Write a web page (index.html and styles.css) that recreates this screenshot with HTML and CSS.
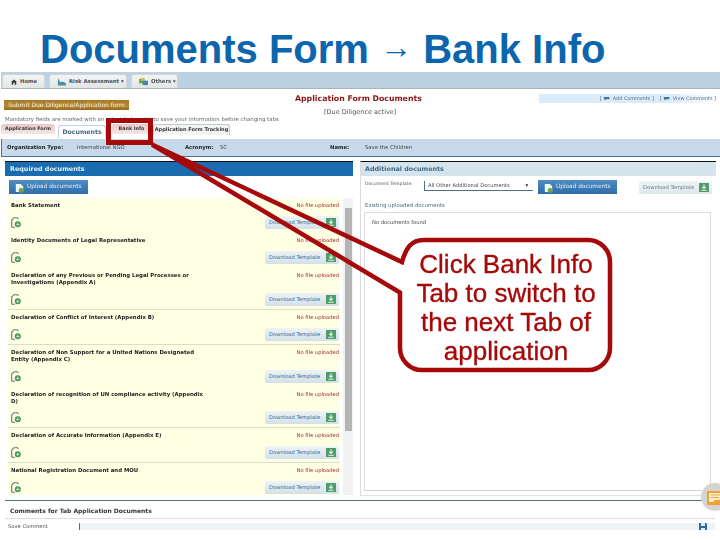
FILE: index.html
```html
<!DOCTYPE html>
<html lang="en">
<head>
<meta charset="utf-8">
<title>Documents Form → Bank Info</title>
<link rel="stylesheet" href="styles.css">
</head>
<body>
<svg class="defs" width="0" height="0" aria-hidden="true">
  <symbol id="file-add" viewBox="0 0 10 11">
    <path d="M.7 10.300V3L3 .7h3.500l1 1.300M.7 10.300H4" fill="none" stroke="#5a7c80" stroke-width="1.100"/>
    <circle cx="6.800" cy="7.300" r="3" fill="#3f8f4f"/>
    <path d="M6.800 5.300v4M4.800 7.300h4" stroke="#dff0cf" stroke-width=".8"/>
  </symbol>
  <symbol id="dl" viewBox="0 0 11 10">
    <rect width="11" height="10" fill="#4e9a68"/>
    <path d="M5.500 1.500v4M3.500 4l2 2 2-2M2.500 8h6" fill="none" stroke="#e6f5e6" stroke-width="1.200"/>
  </symbol>
  <symbol id="upload" viewBox="0 0 11 12">
    <path d="M1 1h6l3 3v7H1z" fill="#f2f6f8"/>
    <circle cx="7.500" cy="9" r="3" fill="#6aa83f"/>
  </symbol>
  <symbol id="bubble" viewBox="0 0 10 6">
    <path d="M1 1h7v3H4L2 5.500V4H1z" fill="#4a7396"/>
  </symbol>
</svg>

<h1 class="title">Documents Form <span class="arrow">→</span> Bank Info</h1>

<div class="app">
  <nav class="nav">
    <a class="nav-tab home"><svg viewBox="0 0 8 8" class="ni"><path d="M4 .5 8 4H7v3.500H5V5H3v2.500H1V4H0z" fill="#33383c"/></svg>Home</a>
    <a class="nav-tab risk"><svg viewBox="0 0 10 9" class="ni w"><path d="M1 0v8h9V6L6 4 4 5 2 2z" fill="#3d8fb8"/><path d="M1 8h9" stroke="#6b9a4b"/></svg>Risk Assessment ▾</a>
    <a class="nav-tab others"><svg viewBox="0 0 10 9" class="ni w"><rect y="1" width="6" height="5" fill="#6aa84f"/><rect x="4" y="3" width="6" height="5" fill="#3f86b5"/><rect x="2" width="4" height="3" fill="#d9b648"/></svg>Others ▾</a>
  </nav>

  <header class="head">
    <div class="head-left">
      <div class="submit">Submit Due Diligence/Application form</div>
    </div>
    <div class="head-center">
      <div class="form-title">Application Form Documents</div>
      <div class="form-sub">[Due Diligence active]</div>
    </div>
    <div class="head-right">
      <span>[ <svg class="bub"><use href="#bubble"/></svg> Add Comments ]</span>
      <span>[ <svg class="bub"><use href="#bubble"/></svg> View Comments ]</span>
    </div>
  </header>
  <p class="hint">Mandatory fields are marked with an asterisk. In order to save your information before changing tabs</p>

  <div class="tabs">
    <span class="tab pink t-app">Application Form</span>
    <span class="tab active">Documents</span>
    <span class="tab pink t-bank">Bank Info</span>
    <span class="tab plain">Application Form Tracking</span>
  </div>

  <div class="org">
    <b class="o1">Organization Type:</b><span class="o2">International NGO</span>
    <b class="o3">Acronym:</b><span class="o4">SC</span>
    <b class="o5">Name:</b><span class="o6">Save the Children</span>
  </div>

  <main class="cols">
    <section class="left">
      <h2 class="bar-blue">Required documents</h2>
      <div class="upload-wrap"><span class="upload"><svg class="up"><use href="#upload"/></svg>Upload documents</span></div>
      <div class="listwrap">
        <div class="list">
          <div class="row"><div class="rtop"><b>Bank Statement</b><span class="none">No file uploaded</span></div><div class="rbot"><svg class="fa"><use href="#file-add"/></svg><span class="dlb">Download Template<svg class="dli"><use href="#dl"/></svg></span></div></div>
          <div class="row"><div class="rtop"><b>Identity Documents of Legal Representative</b><span class="none">No file uploaded</span></div><div class="rbot"><svg class="fa"><use href="#file-add"/></svg><span class="dlb">Download Template<svg class="dli"><use href="#dl"/></svg></span></div></div>
          <div class="row ruled"><div class="rtop"><b>Declaration of any Previous or Pending Legal Processes or Investigations (Appendix A)</b><span class="none">No file uploaded</span></div><div class="rbot"><svg class="fa"><use href="#file-add"/></svg><span class="dlb">Download Template<svg class="dli"><use href="#dl"/></svg></span></div></div>
          <div class="row ruled"><div class="rtop"><b>Declaration of Conflict of Interest (Appendix B)</b><span class="none">No file uploaded</span></div><div class="rbot"><svg class="fa"><use href="#file-add"/></svg><span class="dlb">Download Template<svg class="dli"><use href="#dl"/></svg></span></div></div>
          <div class="row"><div class="rtop"><b>Declaration of Non Support for a United Nations Designated Entity (Appendix C)</b><span class="none">No file uploaded</span></div><div class="rbot"><svg class="fa"><use href="#file-add"/></svg><span class="dlb">Download Template<svg class="dli"><use href="#dl"/></svg></span></div></div>
          <div class="row ruled tight"><div class="rtop"><b>Declaration of recognition of UN compliance activity (Appendix D)</b><span class="none">No file uploaded</span></div><div class="rbot"><svg class="fa"><use href="#file-add"/></svg><span class="dlb">Download Template<svg class="dli"><use href="#dl"/></svg></span></div></div>
          <div class="row ruled"><div class="rtop"><b>Declaration of Accurate Information (Appendix E)</b><span class="none">No file uploaded</span></div><div class="rbot"><svg class="fa"><use href="#file-add"/></svg><span class="dlb">Download Template<svg class="dli"><use href="#dl"/></svg></span></div></div>
          <div class="row last"><div class="rtop"><b>National Registration Document and MOU</b><span class="none">No file uploaded</span></div><div class="rbot"><svg class="fa"><use href="#file-add"/></svg><span class="dlb">Download Template<svg class="dli"><use href="#dl"/></svg></span></div></div>
        </div>
        <div class="scroll"><div class="thumb"></div></div>
      </div>
    </section>

    <section class="right">
      <h2 class="bar-pale">Additional documents</h2>
      <div class="tpl">
        <span class="tpl-label">Document Template:</span>
        <span class="select">All Other Additional Documents<i>▾</i></span>
        <span class="upload"><svg class="up"><use href="#upload"/></svg>Upload documents</span>
        <span class="dlb alt">Download Template<svg class="dli"><use href="#dl"/></svg></span>
      </div>
      <h3 class="exist">Existing uploaded documents</h3>
      <div class="docbox">No documents found</div>
    </section>
  </main>

  <section class="comments">
    <h2 class="c-title">Comments for Tab Application Documents</h2>
    <div class="c-row">
      <span class="c-label">Save Comment</span>
      <div class="c-input"><svg viewBox="0 0 8 8" class="save"><path d="M0 0h7l1 1v7H0z" fill="#2f6a9c"/><rect x="2" width="4" height="3" fill="#dfe9f1"/><rect x="2" y="5" width="4" height="3" fill="#dfe9f1"/></svg></div>
    </div>
  </section>
</div>

<div class="fab"><svg viewBox="0 0 14 16" class="fab-i"><path d="M0 2h14v14H0z" fill="#f3a033"/><path d="M2 4h12v7H8l-2 2H2z" fill="#fdeccd"/><path d="M4 6h10M4 8.500h8" stroke="#e6a552"/></svg></div>

<svg class="anno" viewBox="0 0 720 540" aria-hidden="true">
  <rect x="402" y="240" width="208" height="131" rx="22" fill="#fff"/>
  <rect x="108.500" y="120.500" width="42" height="22" fill="none" stroke="#a5090a" stroke-width="5"/>
  <path d="M400 292.500V348a22 22 0 0 0 22 22H588a22 22 0 0 0 22-22V262a22 22 0 0 0-22-22H424c-13 0-18 8-22 22L152 144.500 400 292.500z" fill="none" stroke="#a5090a" stroke-width="4.500" stroke-linejoin="miter"/>
</svg>
<div class="callout">Click Bank Info Tab to switch to the next Tab of application</div>
</body>
</html>
```

FILE: styles.css
```css
* { box-sizing: border-box; }
html, body { margin: 0; padding: 0; }
body {
  width: 720px;
  height: 540px;
  overflow: hidden;
  position: relative;
  background: #fff;
  font-family: "Liberation Sans", Arial, sans-serif;
}
.defs { position: absolute; }

.title {
  margin: 0;
  height: 72px;
  padding: 28px 0 0 40px;
  font-size: 40px;
  line-height: 43px;
  font-weight: 700;
  color: #0b66ad;
  white-space: nowrap;
}
.arrow { font-weight: 400; font-size: 32px; position: relative; top: -5px; }

.app {
  height: 458px;
  font-family: "DejaVu Sans", Verdana, sans-serif;
  font-size: 5.5px;
  line-height: 7px;
  color: #333;
  filter: blur(.3px);
  display: flex;
  flex-direction: column;
}
.app b { font-weight: 700; color: #222; }

.nav {
  height: 17px;
  flex: none;
  background: #bcd2e3;
  border-bottom: 1px solid #a9b3ba;
  display: flex;
  align-items: flex-end;
  padding-left: 1px;
  gap: 4px;
  margin-left: 1px;
}
.nav-tab {
  height: 14px;
  background: linear-gradient(#f4f4f2, #e2e5e5);
  border: 1px solid #d0d6da;
  border-bottom: 0;
  border-radius: 3px 3px 0 0;
  display: flex;
  align-items: center;
  gap: 3px;
  font-weight: 700;
  color: #4a4f55;
  font-size: 5.3px;
  white-space: nowrap;
}
.home { width: 43px; padding-left: 8px; }
.risk { width: 78px; padding-left: 7px; }
.others { width: 47px; padding-left: 7px; }
.ni { width: 6px; height: 6px; flex: none; }
.ni.w { width: 9px; height: 8px; }

.head {
  height: 27px;
  flex: none;
  display: flex;
  position: relative;
}
.head-left { width: 295px; padding: 11px 0 0 4px; }
.submit {
  width: 125px;
  height: 10px;
  background: linear-gradient(#a87a24, #b98a36 60%, #8e6a1c);
  color: #f4ecd8;
  font-size: 6px;
  line-height: 10px;
  text-align: center;
  white-space: nowrap;
  overflow: hidden;
}
.head-center { width: 244px; padding-top: 6px; }
.form-title { color: #8a1616; font-weight: 700; font-size: 7.800px; white-space: nowrap; line-height: 8px; }
.form-sub { margin: 6px 0 0 29px; font-size: 6.500px; color: #555; white-space: nowrap; }
.head-right {
  margin-top: 5px;
  width: 177px;
  height: 9px;
  background: linear-gradient(90deg, #dcebf9 0 75%, #fff);
  display: flex;
  justify-content: flex-end;
  gap: 6px;
  color: #4f6a80;
  font-size: 4.900px;
  line-height: 8px;
  white-space: nowrap;
}
.bub { width: 8px; height: 5px; vertical-align: -1px; }

.hint {
  margin: 0;
  height: 6px;
  padding-left: 5px;
  font-size: 5.400px;
  line-height: 6px;
  color: #666;
  white-space: nowrap;
  flex: none;
}

.tabs {
  height: 14px;
  flex: none;
  margin-top: 2px;
  display: flex;
  align-items: flex-start;
  padding-left: 1px;
}
.tab { font-size: 4.800px; font-weight: 700; color: #333; white-space: nowrap; height: 10px; line-height: 9px; text-align: center; border-radius: 3px 3px 0 0; }
.pink { background: linear-gradient(#ecc8c8, #f4e6e6); }
.t-app { width: 54px; }
.active { width: 48px; height: 13px; margin: 1px 6px 0 3px; background: #fff; border: 1px solid #c3d1da; border-bottom: 0; color: #45657e; line-height: 11px; font-size: 6.200px; }
.t-bank { width: 39px; }
.plain { width: 77px; height: 11px; margin-left: 2px; background: #f3f5f4; border: 1px solid #c2c9cd; border-bottom: 0; font-size: 5px; }

.org {
  height: 18px;
  flex: none;
  margin: 1px 0 0 1px;
  background: #c6daeb;
  border-left: 1px solid #4f7187;
  border-bottom: 1px solid #4f7187;
  display: grid;
  grid-template-columns: 70px 108px 35px 110px 35px 1fr;
  padding-left: 5px;
  align-items: center;
  font-size: 5.300px;
  white-space: nowrap;
}
.org span { color: #444; }

.cols { flex: none; height: 339px; margin-top: 4px; display: flex; align-items: flex-start; padding-left: 5px; }
.left { width: 348px; border-top: 1px solid #111; }
.bar-blue {
  margin: 0;
  height: 14px;
  background: #1a6cb0;
  color: #e6f0f8;
  font-size: 6.400px;
  line-height: 14px;
  padding-left: 5px;
}
.upload-wrap { height: 22px; padding: 4px 0 0 4px; }
.upload {
  width: 79px;
  height: 14px;
  background: linear-gradient(#4e8cc4, #2f6da8);
  color: #e5eef6;
  font-size: 5.800px;
  line-height: 12px;
  display: inline-flex;
  gap: 3px;
  padding-left: 6px;
  white-space: nowrap;
  flex: none;
}
.up { width: 9px; height: 10px; margin-top: 3px; flex: none; }

.listwrap { display: flex; height: 297px; }
.list { width: 332px; margin-left: 3px; background: #ffffe4; flex: none; overflow: hidden; }
.row { padding: 4px 1px 4px 3px; display: flex; flex-direction: column; gap: 6px; }
.row.ruled { border-bottom: 1px solid #dcdccb; padding-bottom: 3px; }
.row.tight { gap: 5px; }
.rtop { display: flex; justify-content: space-between; align-items: flex-start; min-height: 7px; }
.rtop b { width: 196px; font-size: 5.400px; color: #222; }
.none { color: #a5282a; font-size: 5.200px; white-space: nowrap; }
.rbot { display: flex; justify-content: space-between; align-items: center; height: 14px; }
.fa { width: 10px; height: 11px; flex: none; }
.dlb {
  width: 74px;
  height: 13px;
  background: linear-gradient(#eef3f6, #d3e0e8);
  border-radius: 2px;
  color: #3a6a8e;
  font-size: 5.200px;
  line-height: 13px;
  padding-left: 4px;
  display: flex;
  justify-content: space-between;
  align-items: center;
  white-space: nowrap;
  padding-right: 3px;
}
.dli { width: 10px; height: 9px; flex: none; }
.scroll { width: 10px; margin: 0 0 0 3px; background: #f2f2f2; padding: 10px 1px 64px 2px; flex: none; }
.thumb { height: 100%; background: #b5b5b5; }

.right { width: 356px; height: 335px; margin-left: 7px; border-top: 1px solid #111; border-left: 1px solid #dcdcdc; display: flex; flex-direction: column; border-bottom: 1px solid #e2e2e2; }
.bar-pale { margin: 0; height: 14px; background: #d5e3ec; color: #3d6a8c; font-size: 6.400px; line-height: 14px; padding-left: 4px; flex: none; }
.tpl { display: flex; align-items: flex-start; height: 26px; padding-top: 4px; flex: none; }
.tpl-label { width: 62px; padding-left: 4px; font-size: 4.600px; color: #555; white-space: nowrap; }
.select {
  width: 109px;
  height: 10px;
  margin: 1px 5px 0 1px;
  border-left: 1px solid #4f7187;
  border-bottom: 1px solid #4f7187;
  background: #fff;
  font-size: 5.200px;
  line-height: 9px;
  padding-left: 3px;
  display: flex;
  justify-content: space-between;
  padding-right: 5px;
  white-space: nowrap;
  color: #444;
}
.select i { font-style: normal; color: #222; }
.dlb.alt { margin-left: 22px; width: 73px; background: linear-gradient(#f0f4f4, #dde7e9); color: #5f7f92; margin-top: 1px; }
.exist { margin: 0; height: 10px; padding-left: 4px; font-size: 5.400px; font-weight: 400; color: #446a82; flex: none; line-height: 7px; }
.docbox {
  width: 347px;
  margin: 0 0 4px 3px;
  flex: 1;
  border: 1px solid #dcdcdc;
  border-bottom-color: #d4d4d4;
  padding: 6px 0 0 7px;
  font-size: 5.200px;
  color: #444;
}

.comments { margin: 0 0 0 5px; border-top: 1px solid #4f7187; width: 710px; flex: none; }
.c-title { margin: 0; height: 18px; border-bottom: 1px solid #ddd; font-size: 6px; line-height: 20px; font-weight: 700; color: #333; padding-left: 5px; white-space: nowrap; }
.c-row { display: flex; padding: 4px 0 0 3px; height: 11px; overflow: hidden; }
.c-label { width: 71px; color: #555; font-size: 5.200px; line-height: 7px; flex: none; }
.c-input { flex: 1; height: 7px; background: #eef4f6; border-left: 1px solid #4f7187; display: flex; justify-content: flex-end; padding-right: 8px; }
.save { width: 8px; height: 8px; flex: none; }

.fab {
  position: absolute;
  left: 701px;
  top: 483px;
  width: 28px;
  height: 28px;
  border-radius: 50%;
  background: #d4d4d0;
  padding: 6px 0 0 6px;
}
.fab-i { width: 14px; height: 16px; display: block; }

.anno { position: absolute; left: 0; top: 0; width: 720px; height: 540px; pointer-events: none; }
.callout {
  position: absolute;
  left: 408px;
  top: 250px;
  width: 196px;
  font-size: 26px;
  line-height: 29px;
  text-align: center;
  color: #a5090a;
  -webkit-text-stroke: .35px #a5090a;
}
```
